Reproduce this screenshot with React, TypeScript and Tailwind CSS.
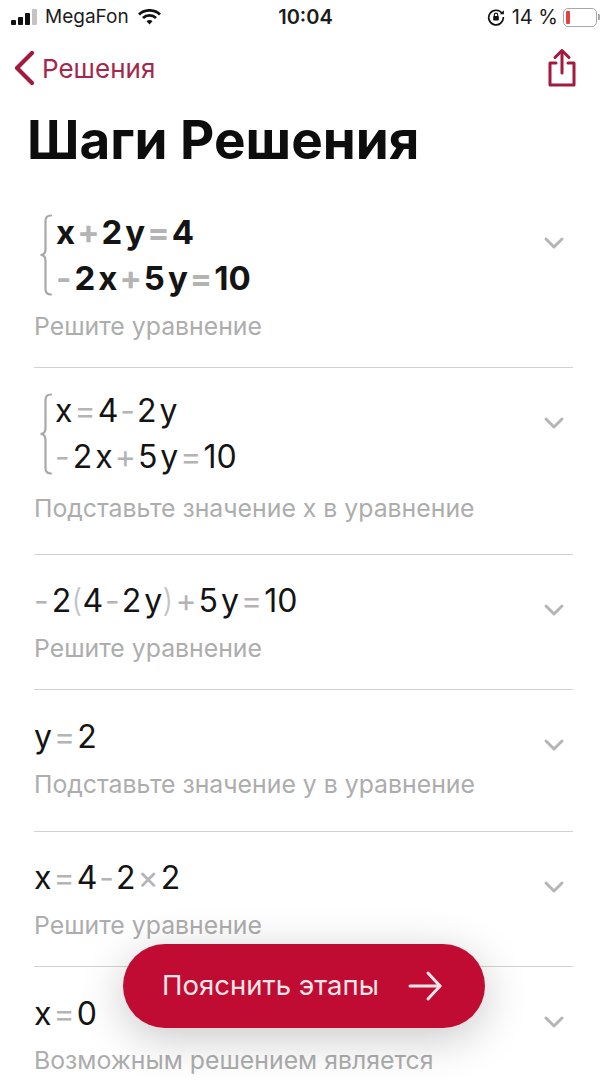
import type { ReactNode } from "react";
import { ChevronDown } from "lucide-react";

const fontClassName = "font-['Inter','Noto_Sans',sans-serif]";

// Grey operator inside an equation
function Op({ children }: { children: ReactNode }) {
  return <span className="text-[#b4b4b4] mx-[2px]">{children}</span>;
}

// Leading sign has no space on its left
function Sign() {
  return <span className="text-[#b4b4b4] mr-[3px]">-</span>;
}

function Paren({ children }: { children: ReactNode }) {
  return <span className="text-[#c4c4c4] font-light">{children}</span>;
}

// Variable sits a little apart from its coefficient
function V({ children }: { children: ReactNode }) {
  return <span className="ml-[3px]">{children}</span>;
}

function Brace({ height }: { height: number }) {
  return (
    <svg width="14" height={height} viewBox={`0 0 14 ${height}`} fill="none" className="shrink-0">
      <path
        d={`M12 1.5C8 1.5 6.5 3.5 6.5 7V${height / 2 - 6}C6.5 ${height / 2 - 2} 4.5 ${height / 2} 1.5 ${height / 2}C4.5 ${height / 2} 6.5 ${height / 2 + 2} 6.5 ${height / 2 + 6}V${height - 7}C6.5 ${height - 3.5} 8 ${height - 1.5} 12 ${height - 1.5}`}
        stroke="#a8a8a8"
        strokeWidth="2.2"
        strokeLinecap="round"
      />
    </svg>
  );
}

function Line({ children, bold }: { children: ReactNode; bold?: boolean }) {
  return (
    <div className={`leading-[46px] text-[#141414] whitespace-nowrap ${bold ? "text-[33px] font-bold" : "text-[32px] font-normal"}`}>
      {children}
    </div>
  );
}

function StepRow({
  children,
  hint,
  rowClassName,
  chevronClassName,
  last,
}: {
  children: ReactNode;
  hint: string;
  rowClassName: string;
  chevronClassName: string;
  last?: boolean;
}) {
  return (
    <div className={`relative ${rowClassName} ${last ? "" : "border-b border-[#d2d2d2]"}`}>
      {children}
      <p className="text-[24.8px] leading-[32px] text-[#adadad] whitespace-nowrap">{hint}</p>
      <ChevronDown
        size={32}
        strokeWidth={2.2}
        color="#b5b5b5"
        className={`absolute right-[3px] ${chevronClassName}`}
      />
    </div>
  );
}

export default function App() {
  return (
    <div className={`relative w-[607px] h-[1080px] overflow-hidden bg-white ${fontClassName}`}>
      {/* Status bar */}
      <div className="flex items-center justify-between h-[34px] pl-[11px] pr-[7px] text-[#1c1c1c]">
        <div className="flex items-center w-[200px]">
          <svg width="27" height="17" viewBox="0 0 27 17" className="mr-[7px]">
            <rect x="0" y="11" width="5" height="5" rx="1" fill="#111" />
            <rect x="7" y="8" width="5" height="8" rx="1" fill="#111" />
            <rect x="14" y="4" width="5" height="12" rx="1" fill="#111" />
            <rect x="21" y="0" width="5" height="16" rx="1" fill="#c4c4c4" />
          </svg>
          <span className="text-[19px]">MegaFon</span>
          <svg width="23" height="17" viewBox="0 0 23 17" className="ml-[9px]">
            <path d="M1 5.5C6.5 0 16.5 0 22 5.5" stroke="#111" strokeWidth="2.8" fill="none" />
            <path d="M5 9C8.5 5.6 14.5 5.6 18 9" stroke="#111" strokeWidth="2.8" fill="none" />
            <path d="M8.5 12.2C10.3 10.6 12.7 10.6 14.5 12.2L11.5 15.5Z" fill="#111" />
          </svg>
        </div>
        <span className="text-[20px] font-semibold">10:04</span>
        <div className="flex items-center justify-end w-[200px]">
          <svg width="18" height="18" viewBox="0 0 16 16" className="mr-[7px]">
            <path d="M13.5 5A6.5 6.5 0 1 0 14.5 8" stroke="#111" strokeWidth="1.5" fill="none" />
            <path d="M11.5 5.5H15V2Z" fill="#111" />
            <rect x="5.5" y="7" width="5" height="4" rx="0.6" fill="#111" />
            <path d="M6.5 7V6A1.5 1.5 0 0 1 9.5 6V7" stroke="#111" strokeWidth="1" fill="none" />
          </svg>
          <span className="text-[20px] mr-[5px]">14 %</span>
          <div className="flex items-center h-[19px] w-[34px] border border-[#a8a8a8] rounded-[5px] p-[2px]">
            <div className="w-[4px] h-full bg-[#e0433d] rounded-[1px]" />
          </div>
          <div className="w-[2px] h-[6px] ml-[1px] bg-[#a8a8a8] rounded-r-[1px]" />
        </div>
      </div>

      {/* Navigation */}
      <div className="flex items-center justify-between h-[68px] pl-[14px] pr-[30px] text-[#a21a3e]">
        <div className="flex items-center">
          <svg width="20" height="36" viewBox="0 0 20 36" fill="none">
            <path d="M18 3L3 18L18 33" stroke="#a21a3e" strokeWidth="4.2" strokeLinecap="round" strokeLinejoin="round" />
          </svg>
          <span className="text-[26px] ml-[8px] text-[#a3284a]">Решения</span>
        </div>
        <svg width="30" height="40" viewBox="0 0 30 40" fill="none" stroke="#a21a3e" strokeWidth="3" strokeLinecap="round" strokeLinejoin="round">
          <path d="M9 15H3V37H27V15H21" />
          <path d="M15 25V3" />
          <path d="M8 9.5L15 2.5L22 9.5" />
        </svg>
      </div>

      <h1 className="pl-[27px] mt-[9px] text-[53px] leading-[58px] font-bold text-[#0d0d0d] whitespace-nowrap">
        Шаги Решения
      </h1>

      {/* Steps */}
      <div className="mx-[34px] mt-[40px] w-[539px]">
        <StepRow hint="Решите уравнение" rowClassName="h-[159px]" chevronClassName="top-[18px]">
          <div className="flex items-center ml-[5px] mb-[9px]">
            <Brace height={82} />
            <div className="ml-[3px]">
              <Line bold>x<Op>+</Op>2<V>y</V><Op>=</Op>4</Line>
              <Line bold><Sign />2<V>x</V><Op>+</Op>5<V>y</V><Op>=</Op>10</Line>
            </div>
          </div>
        </StepRow>

        <StepRow hint="Подставьте значение x в уравнение" rowClassName="h-[187px] pt-[20px]" chevronClassName="top-[39px]">
          <div className="flex items-center ml-[5px] mb-[12px]">
            <Brace height={82} />
            <div className="ml-[2px]">
              <Line>x<Op>=</Op>4<Op>-</Op>2<V>y</V></Line>
              <Line><Sign />2<V>x</V><Op>+</Op>5<V>y</V><Op>=</Op>10</Line>
            </div>
          </div>
        </StepRow>

        <StepRow hint="Решите уравнение" rowClassName="h-[135px] pt-[23px]" chevronClassName="top-[39px]">
          <div className="mb-[8px]">
            <Line><Sign />2<Paren>(</Paren>4<Op>-</Op>2<V>y</V><Paren>)</Paren><Op>+</Op>5<V>y</V><Op>=</Op>10</Line>
          </div>
        </StepRow>

        <StepRow hint="Подставьте значение y в уравнение" rowClassName="h-[142px] pt-[24px]" chevronClassName="top-[39px]">
          <div className="mb-[8px]">
            <Line>y<Op>=</Op>2</Line>
          </div>
        </StepRow>

        <StepRow hint="Решите уравнение" rowClassName="h-[135px] pt-[23px]" chevronClassName="top-[39px]">
          <div className="mb-[8px]">
            <Line>x<Op>=</Op>4<Op>-</Op>2<Op>×</Op>2</Line>
          </div>
        </StepRow>

        <StepRow hint="Возможным решением является" rowClassName="h-[114px] pt-[24px]" chevronClassName="top-[39px]" last>
          <div className="mb-[7px]">
            <Line>x<Op>=</Op>0</Line>
          </div>
        </StepRow>
      </div>

      {/* Floating button */}
      <button className="absolute left-[123px] top-[944px] flex items-center w-[362px] h-[84px] pl-[39px] rounded-full bg-[#c00c32] text-[#fbe6ea] shadow-[0_10px_45px_rgba(0,0,0,0.22)]">
        <span className="text-[27.5px] whitespace-nowrap">Пояснить этапы</span>
        <svg width="35" height="32" viewBox="0 0 35 32" fill="none" stroke="#fbe6ea" strokeWidth="3" strokeLinecap="round" strokeLinejoin="round" className="ml-[29px]">
          <path d="M2 16H32" />
          <path d="M20 3L32 16L20 29" />
        </svg>
      </button>
    </div>
  );
}
